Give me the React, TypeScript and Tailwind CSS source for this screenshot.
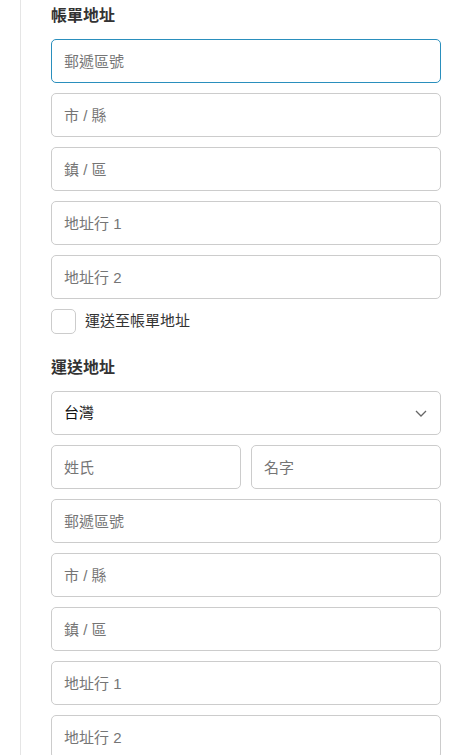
import React from 'react';

const font = { fontFamily: '"Liberation Sans", "Noto Sans CJK TC", sans-serif' };

const inputCls =
  'block w-full h-[44px] rounded-[5px] border border-[#cccccc] bg-white px-[12px] text-[15px] text-[#333] placeholder:text-[#757575] outline-none focus:border-[#2a8fbd]';

const Field = ({ placeholder, focused }: { placeholder: string; focused?: boolean }) => (
  <input
    type="text"
    placeholder={placeholder}
    autoFocus={focused}
    className={`${inputCls} ${focused ? 'border-[#2a8fbd]' : ''}`}
  />
);

const App = () => {
  return (
    <div className="min-h-[755px] bg-white" style={font}>
      <div className="ml-[20px] mr-[31px] border-l border-[#e5e5e5] pl-[30px] pt-[4px] pb-[40px]">
        {/* Billing address */}
        <h2 className="text-[16px] leading-[24px] font-bold text-[#333] mb-[11px]">帳單地址</h2>
        <div className="flex flex-col gap-[10px]">
          <Field placeholder="郵遞區號" focused />
          <Field placeholder="市 / 縣" />
          <Field placeholder="鎮 / 區" />
          <Field placeholder="地址行 1" />
          <Field placeholder="地址行 2" />
        </div>

        <label className="mt-[10px] flex items-center gap-[9px] cursor-pointer">
          <span className="w-[25px] h-[25px] rounded-[5px] border border-[#cccccc] bg-white shrink-0"></span>
          <span className="text-[15px] text-[#333]">運送至帳單地址</span>
        </label>

        {/* Shipping address */}
        <h2 className="mt-[22px] text-[16px] leading-[24px] font-bold text-[#333] mb-[11px]">運送地址</h2>
        <div className="flex flex-col gap-[10px]">
          <div className="relative">
            <select
              className="block w-full h-[44px] appearance-none rounded-[5px] border border-[#cccccc] bg-white px-[12px] text-[15px] text-[#111] outline-none"
              defaultValue="tw"
              style={font}
            >
              <option value="tw">台灣</option>
            </select>
            <svg
              className="pointer-events-none absolute right-[14px] top-[19px]"
              width="12"
              height="7"
              viewBox="0 0 12 7"
              fill="none"
              stroke="#666"
              strokeWidth="1.3"
            >
              <path d="M1 1l5 5 5-5" />
            </svg>
          </div>
          <div className="flex gap-[10px]">
            <Field placeholder="姓氏" />
            <Field placeholder="名字" />
          </div>
          <Field placeholder="郵遞區號" />
          <Field placeholder="市 / 縣" />
          <Field placeholder="鎮 / 區" />
          <Field placeholder="地址行 1" />
          <Field placeholder="地址行 2" />
        </div>
      </div>
    </div>
  );
};

export default App;
